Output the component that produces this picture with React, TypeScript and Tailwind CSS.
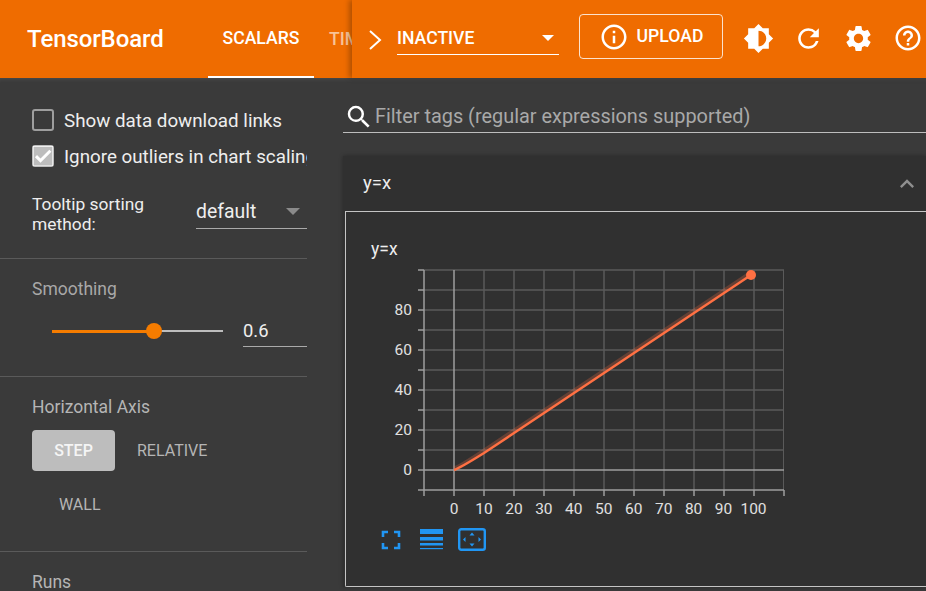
import { MdBrightness6, MdRefresh, MdSettings, MdHelpOutline, MdInfoOutline, MdSearch, MdExpandLess, MdCheck } from 'react-icons/md';

const gridX = [484, 514, 544, 574, 604, 634, 664, 694, 724, 754];
const gridY = [270, 290, 310, 330, 350, 370, 390, 410, 430, 450];
const xLabels = [0, 10, 20, 30, 40, 50, 60, 70, 80, 90, 100];
const yLabels = [80, 60, 40, 20, 0];

function Chart() {
  const line = 'M454 470 C460 468 468 463 484 453 L514 433 L751 275';
  return (
    <svg width="440" height="270" viewBox="0 0 440 270" className="block">
      <g transform="translate(-371 -257)">
        {gridX.map((x) => (
          <g key={x}>
            <line x1={x} y1="270" x2={x} y2="490" stroke="#5a5a5a" strokeWidth="1.5" />
            <line x1={x} y1="490" x2={x} y2="496" stroke="#9e9e9e" strokeWidth="1.5" />
          </g>
        ))}
        {gridY.map((y) => (
          <g key={y}>
            <line x1="424" y1={y} x2="784" y2={y} stroke="#5a5a5a" strokeWidth="1.5" />
            <line x1="418" y1={y} x2="424" y2={y} stroke="#9e9e9e" strokeWidth="1.5" />
          </g>
        ))}
        <line x1="783.5" y1="270" x2="783.5" y2="490" stroke="#5a5a5a" strokeWidth="1" />
        <line x1="424" y1="270" x2="424" y2="496" stroke="#9e9e9e" strokeWidth="1.5" />
        <line x1="424" y1="490" x2="784" y2="490" stroke="#9e9e9e" strokeWidth="1.5" />
        <line x1="454" y1="270" x2="454" y2="496" stroke="#9e9e9e" strokeWidth="1.5" />
        <line x1="418" y1="470" x2="784" y2="470" stroke="#9e9e9e" strokeWidth="1.5" />
        <line x1="418" y1="490" x2="424" y2="490" stroke="#9e9e9e" strokeWidth="1.5" />
        <line x1="784" y1="490" x2="784" y2="496" stroke="#9e9e9e" strokeWidth="1.5" />
        {xLabels.map((v, i) => (
          <text key={v} x={454 + i * 29.95} y="514" textAnchor="middle" fill="#e0e0e0" fontSize="15.5">
            {v}
          </text>
        ))}
        {yLabels.map((v) => (
          <text key={v} x="412" y={474.5 - v * 2} textAnchor="end" fill="#e0e0e0" fontSize="15.5">
            {v}
          </text>
        ))}
        <path d="M454 468 C462 465 470 459 484 450 L514 430 L751 272" fill="none" stroke="#ff7043" strokeOpacity="0.25" strokeWidth="3" />
        <path d={line} fill="none" stroke="#ff7043" strokeWidth="2.5" />
        <circle cx="751" cy="275" r="5" fill="#ff7043" />
      </g>
    </svg>
  );
}

function FitIcon() {
  return (
    <svg width="20" height="20" viewBox="0 0 20 20" fill="none" stroke="#2196f3" strokeWidth="2.6">
      <path d="M2 7V2H7M13 2H18V7M18 13V18H13M7 18H2V13" />
    </svg>
  );
}

function LinesIcon() {
  return (
    <svg width="24" height="21" viewBox="0 0 24 21" fill="#2196f3">
      <rect x="0" y="0" width="23" height="5" />
      <rect x="0" y="8" width="23" height="3.5" />
      <rect x="0" y="14" width="23" height="2.5" />
      <rect x="0" y="19" width="23" height="1.2" />
    </svg>
  );
}

function ZoomBoxIcon() {
  return (
    <svg width="28" height="23" viewBox="0 0 28 23" fill="none">
      <rect x="1.2" y="1.2" width="25.6" height="20.6" rx="2" stroke="#2196f3" strokeWidth="2.4" />
      <path d="M14 4.5L16.5 7.5H11.5ZM14 18.5L16.5 15.5H11.5ZM5 11.5L7.5 9V14ZM23 11.5L20.5 9V14Z" fill="#2196f3" />
    </svg>
  );
}

export default function App() {
  return (
    <div className="w-[926px] h-[591px] overflow-hidden bg-[#3a3a3a] font-['Roboto',sans-serif] text-white">
      {/* Header */}
      <header className="flex h-[78px] bg-[#ef6c00]">
        <div className="flex w-[352px] shrink-0 overflow-hidden">
          <div className="pl-[27px] w-[208px] shrink-0 leading-[78px] text-[24px] font-medium tracking-[-0.1px]">TensorBoard</div>
          <div className="flex shrink-0">
            <div className="w-[106px] h-[78px] border-b-2 border-white flex items-center justify-center text-[17.6px] font-medium">SCALARS</div>
            <div className="pl-[15px] h-[78px] flex items-center text-[17.6px] font-medium text-white/60 whitespace-nowrap">TIME SERIES</div>
          </div>
        </div>
        <div className="flex flex-1 items-center relative shadow-[-3px_0_5px_rgba(0,0,0,0.25)]">
          <svg width="14" height="22" viewBox="0 0 14 22" fill="none" stroke="white" strokeWidth="2" className="ml-[16px] mt-[1px]">
            <path d="M2 2L12 11L2 20" />
          </svg>
          <div className="ml-[15px] w-[162px] h-[35px] -mt-[3px] pt-[2px] border-b border-white flex items-center justify-between">
            <span className="text-[17.6px] font-medium">INACTIVE</span>
            <span className="mr-[5px] w-0 h-0 border-x-[6px] border-x-transparent border-t-[6px] border-t-white" />
          </div>
          <button className="ml-[20px] w-[144px] h-[45px] -mt-[5px] rounded-[4px] border border-white/80 flex items-center justify-center gap-[8px] text-[17.6px] font-medium">
            <MdInfoOutline className="text-[30px]" />
            UPLOAD
          </button>
          <div className="ml-[10px] flex -mt-px">
            <div className="w-[50px] flex justify-center"><MdBrightness6 className="text-[31px]" /></div>
            <div className="w-[50px] flex justify-center"><MdRefresh className="text-[31px]" /></div>
            <div className="w-[50px] flex justify-center"><MdSettings className="text-[31px]" /></div>
            <div className="w-[50px] flex justify-center"><MdHelpOutline className="text-[30px]" /></div>
          </div>
        </div>
      </header>

      <div className="flex h-[513px] shadow-[inset_0_4px_4px_-3px_rgba(255,255,255,0.1)]">
        {/* Sidebar */}
        <aside className="w-[307px] shrink-0 overflow-hidden">
          <div className="h-[180px] pl-[32px] pt-[31px]">
            <div className="flex items-center h-[22px]">
              <span className="w-[22px] h-[22px] shrink-0 rounded-[3px] border-2 border-[#9e9e9e]" />
              <span className="ml-[10px] pt-[2px] text-[18.8px] text-[#eeeeee] whitespace-nowrap">Show data download links</span>
            </div>
            <div className="flex items-center h-[22px] mt-[14px]">
              <span className="w-[22px] h-[22px] shrink-0 rounded-[3px] bg-[#bdbdbd] flex items-center justify-center">
                <MdCheck className="text-[20px] text-white" stroke="white" strokeWidth="1.5" />
              </span>
              <span className="ml-[10px] pt-[2px] text-[18.8px] text-[#eeeeee] whitespace-nowrap">Ignore outliers in chart scaling</span>
            </div>
            <div className="flex mt-[26px]">
              <div className="w-[164px] mt-[1px] text-[17.4px] leading-[20px] text-[#eeeeee]">
                Tooltip sorting<br />method:
              </div>
              <div className="w-[111px] h-[36px] pt-[2px] border-b border-[#aaaaaa] flex items-center justify-between">
                <span className="text-[19.4px] text-[#eeeeee]">default</span>
                <span className="mr-[7px] w-0 h-0 border-x-[7px] border-x-transparent border-t-[7px] border-t-[#8a8a8a]" />
              </div>
            </div>
          </div>
          <div className="h-[118px] border-t border-[#5a5a5a] pl-[32px] pt-[20px]">
            <div className="text-[17.5px] leading-[20px] text-[#a8a8a8]">Smoothing</div>
            <div className="flex items-center mt-[14px]">
              <div className="ml-[20px] mt-[2px] w-[171px] h-[2px] bg-[#bdbdbd] relative">
                <div className="w-[102px] h-[3px] -mt-[0.5px] bg-[#f57c00]" />
                <div className="absolute left-[94px] top-[-7px] w-[16px] h-[16px] rounded-full bg-[#f57c00]" />
              </div>
              <div className="ml-[20px] w-[64px] h-[34px] pt-[4px] border-b border-[#aaaaaa] text-[18.4px] text-[#eeeeee]">0.6</div>
            </div>
          </div>
          <div className="h-[175px] border-t border-[#5a5a5a] pl-[32px] pt-[20px]">
            <div className="text-[17.5px] leading-[20px] text-[#b5b5b5]">Horizontal Axis</div>
            <div className="flex items-center mt-[13px]">
              <div className="w-[83px] h-[41px] rounded-[4px] bg-[#bdbdbd] flex items-center justify-center text-[16px] font-medium text-[#f5f5f5]">STEP</div>
              <div className="ml-[22px] text-[16px] text-[#b5b5b5]">RELATIVE</div>
            </div>
            <div className="ml-[27px] mt-[22px] text-[16px] text-[#b5b5b5]">WALL</div>
          </div>
          <div className="border-t border-[#5a5a5a] pl-[32px] pt-[20px] text-[17.5px] leading-[20px] text-[#b5b5b5]">Runs</div>
        </aside>

        {/* Main */}
        <main className="flex-1 pl-[36px] min-w-0">
          <div className="h-[55px] border-b border-[#bdbdbd] flex items-center mb-[23px] pt-[23px]">
            <MdSearch className="ml-[1px] text-[30px] text-white shrink-0" />
            <span className="ml-[1px] text-[19.9px] text-[#a9a9a9] whitespace-nowrap">Filter tags (regular expressions supported)</span>
          </div>
          <section className="shadow-[0_0_4px_rgba(0,0,0,0.3)] bg-[#303030]">
            <div className="h-[55px] flex items-center justify-between pl-[20px] pr-[5px]">
              <span className="text-[18.5px] text-[#eeeeee]">y=x</span>
              <MdExpandLess className="text-[28px] text-[#8f8f8f]" />
            </div>
            <div className="ml-[2px] h-[376px] border-l border-t border-b border-[#c4c4c4] rounded-bl-[2px] pt-[27px] pl-[25px]">
              <div className="text-[17.5px] leading-[20px] text-[#eeeeee]">y=x</div>
              <div className="-mt-[2px]">
                <Chart />
              </div>
              <div className="flex items-center mt-[1px] pl-[10px]">
                <FitIcon />
                <div className="ml-[19px]"><LinesIcon /></div>
                <div className="ml-[14px]"><ZoomBoxIcon /></div>
              </div>
            </div>
          </section>
        </main>
      </div>
    </div>
  );
}
